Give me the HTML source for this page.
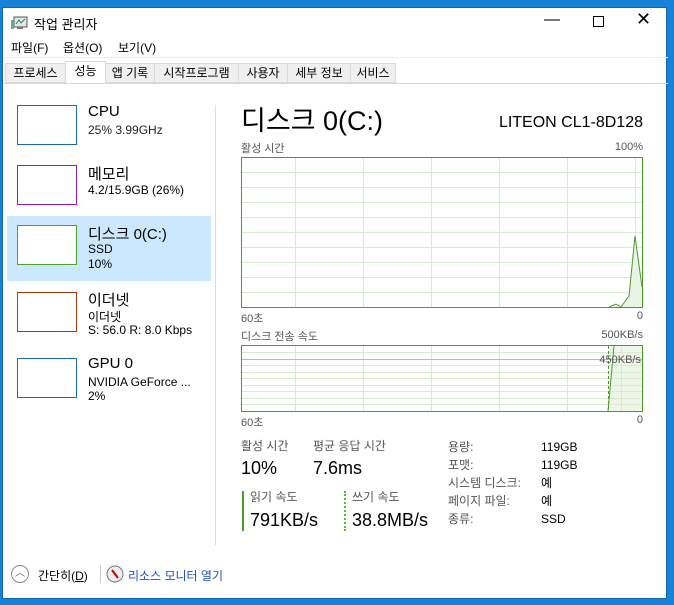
<!DOCTYPE html>
<html><head><meta charset="utf-8"><style>
*{margin:0;padding:0;box-sizing:border-box}
body{width:674px;height:605px;background:#1683d8;position:relative;overflow:hidden;font-family:"Liberation Sans","Noto Sans CJK KR",sans-serif;color:#000}
.win{position:absolute;left:2px;top:7px;width:665px;height:592px;background:#fff;border:1px solid #1066b0}
.a{position:absolute;white-space:nowrap}
.tab{position:absolute;top:55px;height:20px;border:1px solid #d9d9d9;background:#f0f0f0;font-size:12px;line-height:18px;text-align:center}
.thumb{position:absolute;left:14px;width:60px;height:40px;border:1px solid}
.g{color:#555}
</style></head><body>
<div class="win">
<svg class="a" style="left:8px;top:7px" width="18" height="16"><rect x="3" y="2" width="13" height="10" fill="#dfe8ef" stroke="#555"/><polyline points="5,9 8,5 10,8 14,4" fill="none" stroke="#2a8a3a"/><rect x="0" y="5" width="3" height="9" fill="#6a9"/><rect x="6" y="12" width="6" height="2" fill="#777"/></svg>
<div class="a" style="left:31px;top:6px;font-size:13px">작업 관리자</div>
<div class="a" style="left:541px;top:3px;font-size:16px">&#x2014;</div>
<div class="a" style="left:590px;top:8px;width:11px;height:11px;border:1px solid #000"></div>
<div class="a" style="left:633px;top:1px;font-size:18px;font-weight:300">✕</div>
<div class="a" style="left:8px;top:31px;font-size:12px">파일(F)</div>
<div class="a" style="left:60px;top:31px;font-size:12px">옵션(O)</div>
<div class="a" style="left:115px;top:31px;font-size:12px">보기(V)</div>
<div class="a" style="left:0;top:49px;width:665px;height:1px;background:#eee"></div>
<div class="tab" style="left:2px;width:61px">프로세스</div>
<div class="tab" style="left:62px;width:41px;top:53px;height:23px;background:#fff;border-bottom:none">성능</div>
<div class="tab" style="left:102px;width:50px">앱 기록</div>
<div class="tab" style="left:151px;width:85px">시작프로그램</div>
<div class="tab" style="left:235px;width:50px">사용자</div>
<div class="tab" style="left:284px;width:64px">세부 정보</div>
<div class="tab" style="left:347px;width:46px">서비스</div>
<div class="a" style="left:0;top:75px;width:665px;height:1px;background:#d9d9d9"></div>
<div class="a" style="left:212px;top:97px;width:1px;height:440px;background:#ddd"></div>

<div class="a" style="left:4px;top:208px;width:204px;height:65px;background:#cce8ff"></div>
<div class="thumb" style="top:97px;border-color:#1a6bb4"></div>
<div class="a" style="left:85px;top:95px;font-size:15px">CPU</div>
<div class="a g" style="left:85px;top:115px;font-size:12px;color:#222">25% 3.99GHz</div>
<div class="thumb" style="top:157px;border-color:#8b20b8"></div>
<div class="a" style="left:85px;top:155px;font-size:15px">메모리</div>
<div class="a" style="left:85px;top:175px;font-size:12px">4.2/15.9GB (26%)</div>
<div class="thumb" style="top:217px;border-color:#4aa42a;background:#fff"></div>
<div class="a" style="left:85px;top:215px;font-size:15px">디스크 0(C:)</div>
<div class="a" style="left:85px;top:234px;font-size:12px">SSD</div>
<div class="a" style="left:85px;top:249px;font-size:12px">10%</div>
<div class="thumb" style="top:284px;border-color:#a83c0c"></div>
<div class="a" style="left:85px;top:281px;font-size:15px">이더넷</div>
<div class="a" style="left:85px;top:300px;font-size:12px">이더넷</div>
<div class="a" style="left:85px;top:315px;font-size:12px">S: 56.0 R: 8.0 Kbps</div>
<div class="thumb" style="top:350px;border-color:#1a6bb4"></div>
<div class="a" style="left:85px;top:347px;font-size:15px">GPU 0</div>
<div class="a" style="left:85px;top:367px;font-size:12px">NVIDIA GeForce ...</div>
<div class="a" style="left:85px;top:381px;font-size:12px">2%</div>

<div class="a" style="left:238px;top:91px;font-size:27px">디스크 0(C:)</div>
<div class="a" style="right:23px;top:106px;font-size:16px">LITEON CL1-8D128</div>
<div class="a g" style="left:238px;top:132px;font-size:11px">활성 시간</div>
<div class="a g" style="right:23px;top:133px;font-size:11px">100%</div>
<svg class="a" style="left:238px;top:149px" width="402" height="151">
<rect x="0.5" y="0.5" width="401" height="150" fill="#fff" stroke="#4c9a2a"/>
<g stroke="#d9ead3">
<line x1="1" y1="15.5" x2="401" y2="15.5"/><line x1="1" y1="30.5" x2="401" y2="30.5"/><line x1="1" y1="45.5" x2="401" y2="45.5"/><line x1="1" y1="60.5" x2="401" y2="60.5"/><line x1="1" y1="75.5" x2="401" y2="75.5"/><line x1="1" y1="90.5" x2="401" y2="90.5"/><line x1="1" y1="105.5" x2="401" y2="105.5"/><line x1="1" y1="120.5" x2="401" y2="120.5"/><line x1="1" y1="135.5" x2="401" y2="135.5"/>
<line x1="54.5" y1="1" x2="54.5" y2="150"/><line x1="122.5" y1="1" x2="122.5" y2="150"/><line x1="190.5" y1="1" x2="190.5" y2="150"/><line x1="258.5" y1="1" x2="258.5" y2="150"/><line x1="326.5" y1="1" x2="326.5" y2="150"/><line x1="394.5" y1="1" x2="394.5" y2="150"/></g>
<polygon points="370,150 375,147 380,150 388,139 394,79 401,130 401,150" fill="#eaf4e4"/>
<polyline points="368,150 375,147 380,150 388,139 394,79 401,130" fill="none" stroke="#4c9a2a"/>
</svg>
<div class="a g" style="left:238px;top:302px;font-size:11px">60초</div>
<div class="a g" style="right:23px;top:302px;font-size:11px">0</div>
<div class="a g" style="left:238px;top:320px;font-size:11px">디스크 전송 속도</div>
<div class="a g" style="right:23px;top:321px;font-size:11px">500KB/s</div>
<svg class="a" style="left:238px;top:337px" width="402" height="67">
<rect x="0.5" y="0.5" width="401" height="66" fill="#fff" stroke="#4c9a2a"/>
<rect x="369" y="1" width="32" height="65" fill="#eef6ea"/>
<g stroke="#d9ead3">
<line x1="1" y1="7.5" x2="401" y2="7.5"/><line x1="1" y1="20.5" x2="401" y2="20.5"/><line x1="1" y1="27.5" x2="401" y2="27.5"/><line x1="1" y1="33.5" x2="401" y2="33.5"/><line x1="1" y1="40.5" x2="401" y2="40.5"/><line x1="1" y1="46.5" x2="401" y2="46.5"/><line x1="1" y1="53.5" x2="401" y2="53.5"/><line x1="1" y1="59.5" x2="401" y2="59.5"/>
<line x1="54.5" y1="1" x2="54.5" y2="66"/><line x1="122.5" y1="1" x2="122.5" y2="66"/><line x1="190.5" y1="1" x2="190.5" y2="66"/><line x1="258.5" y1="1" x2="258.5" y2="66"/><line x1="326.5" y1="1" x2="326.5" y2="66"/><line x1="380.5" y1="1" x2="380.5" y2="66"/></g>
<line x1="1" y1="14.5" x2="401" y2="14.5" stroke="#9fd08a"/>
<line x1="367.5" y1="1" x2="367.5" y2="66" stroke="#4c9a2a" stroke-dasharray="3,2"/>
<polyline points="367,66 373,1" fill="none" stroke="#4c9a2a"/>
</svg>
<div class="a g" style="right:25px;top:346px;font-size:11px">450KB/s</div>
<div class="a g" style="left:238px;top:406px;font-size:11px">60초</div>
<div class="a g" style="right:23px;top:406px;font-size:11px">0</div>

<div class="a g" style="left:238px;top:429px;font-size:12px">활성 시간</div>
<div class="a" style="left:238px;top:450px;font-size:18px">10%</div>
<div class="a g" style="left:310px;top:429px;font-size:12px">평균 응답 시간</div>
<div class="a" style="left:310px;top:450px;font-size:18px">7.6ms</div>
<div class="a" style="left:239px;top:483px;width:2px;height:40px;background:#4c9a2a"></div>
<div class="a g" style="left:247px;top:480px;font-size:12px">읽기 속도</div>
<div class="a" style="left:247px;top:502px;font-size:18px">791KB/s</div>
<div class="a" style="left:341px;top:483px;width:0;height:40px;border-left:2px dotted #4fbf2a"></div>
<div class="a g" style="left:349px;top:480px;font-size:12px">쓰기 속도</div>
<div class="a" style="left:349px;top:502px;font-size:18px">38.8MB/s</div>
<div class="a g" style="left:445px;top:430px;font-size:12px;line-height:18px">용량:<br>포맷:<br>시스템 디스크:<br>페이지 파일:<br>종류:</div>
<div class="a" style="left:538px;top:430px;font-size:12px;line-height:18px">119GB<br>119GB<br>예<br>예<br>SSD</div>

<div class="a" style="left:8px;top:557px;width:18px;height:18px;border:1px solid #888;border-radius:50%;font-size:10px;text-align:center;line-height:16px;color:#666">︿</div>
<div class="a" style="left:35px;top:559px;font-size:12px">간단히(<u>D</u>)</div>
<div class="a" style="left:97px;top:557px;width:1px;height:18px;background:#ccc"></div>
<svg class="a" style="left:103px;top:557px" width="18" height="18"><circle cx="9" cy="9" r="8" fill="#eee" stroke="#777"/><line x1="6" y1="5" x2="12" y2="13" stroke="#c00" stroke-width="2"/></svg>
<div class="a" style="left:125px;top:559px;font-size:12px;color:#1f4fc8">리소스 모니터 열기</div>
</div>
</body></html>
